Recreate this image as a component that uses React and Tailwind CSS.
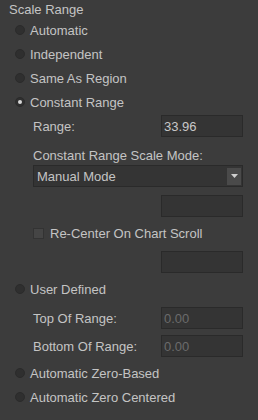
import React from "react";

const Radio = ({ label, checked }) => (
  <div className="flex items-center h-6 pl-[15px] gap-[5px]">
    <span className="w-[10px] h-[10px] rounded-full bg-[#2f2f2f] border border-[#2b2b2b] flex items-center justify-center">
      {checked && <span className="w-[4px] h-[4px] rounded-full bg-[#d8d8d8]" />}
    </span>
    <span className="leading-none">{label}</span>
  </div>
);

const Field = ({ value, disabled }) => (
  <div
    className={`w-[82px] h-[22px] bg-[#343434] border border-[#2a2a2a] pl-[2px] flex items-center leading-none ${
      disabled ? "text-[#6b6b6b]" : "text-[#c8c8c8]"
    }`}
  >
    {value}
  </div>
);

const LabelRow = ({ label, value, disabled, className = "" }) => (
  <div className={`flex items-center pl-[33px] ${className}`}>
    <span className="w-[128px] leading-none">{label}</span>
    <Field value={value} disabled={disabled} />
  </div>
);

const App = () => {
  return (
    <div
      className="w-[258px] h-[420px] bg-[#3c3c3c] text-[#c4c4c4] text-[13px] flex flex-col"
      style={{ fontFamily: '"Liberation Sans", Arial, sans-serif' }}
    >
      <div className="h-[18px] pl-[9px] flex items-center leading-none">Scale Range</div>
      <Radio label="Automatic" />
      <Radio label="Independent" />
      <Radio label="Same As Region" />
      <Radio label="Constant Range" checked />

      <LabelRow label="Range:" value="33.96" className="h-6" />

      <div className="h-5 mt-[7px] pl-[33px] flex items-center leading-none">
        Constant Range Scale Mode:
      </div>
      <div className="ml-[33px] w-[210px] h-[22px] bg-[#343434] border border-[#2a2a2a] flex items-center justify-between">
        <span className="pl-[3px] leading-none">Manual Mode</span>
        <span className="w-[14px] h-[17px] mr-[1px] bg-[#4a4a4a] flex items-center justify-center">
          <svg width="7" height="4" viewBox="0 0 7 4">
            <path d="M0 0h7L3.5 4z" fill="#d0d0d0" />
          </svg>
        </span>
      </div>
      <div className="mt-2 pl-[161px]">
        <Field value="" />
      </div>

      <div className="h-[22px] mt-[5px] pl-[33px] flex items-center gap-[6px]">
        <span className="w-[11px] h-[11px] bg-[#454545] border border-[#333333]" />
        <span className="leading-none">Re-Center On Chart Scroll</span>
      </div>
      <div className="mt-[7px] pl-[161px]">
        <Field value="" />
      </div>

      <div className="mt-[4px]">
        <Radio label="User Defined" />
      </div>
      <LabelRow label="Top Of Range:" value="0.00" disabled className="mt-[6px]" />
      <LabelRow label="Bottom Of Range:" value="0.00" disabled className="mt-[6px]" />

      <div className="mt-[4px]">
        <Radio label="Automatic Zero-Based" />
        <Radio label="Automatic Zero Centered" />
      </div>
    </div>
  );
};

export default App;
